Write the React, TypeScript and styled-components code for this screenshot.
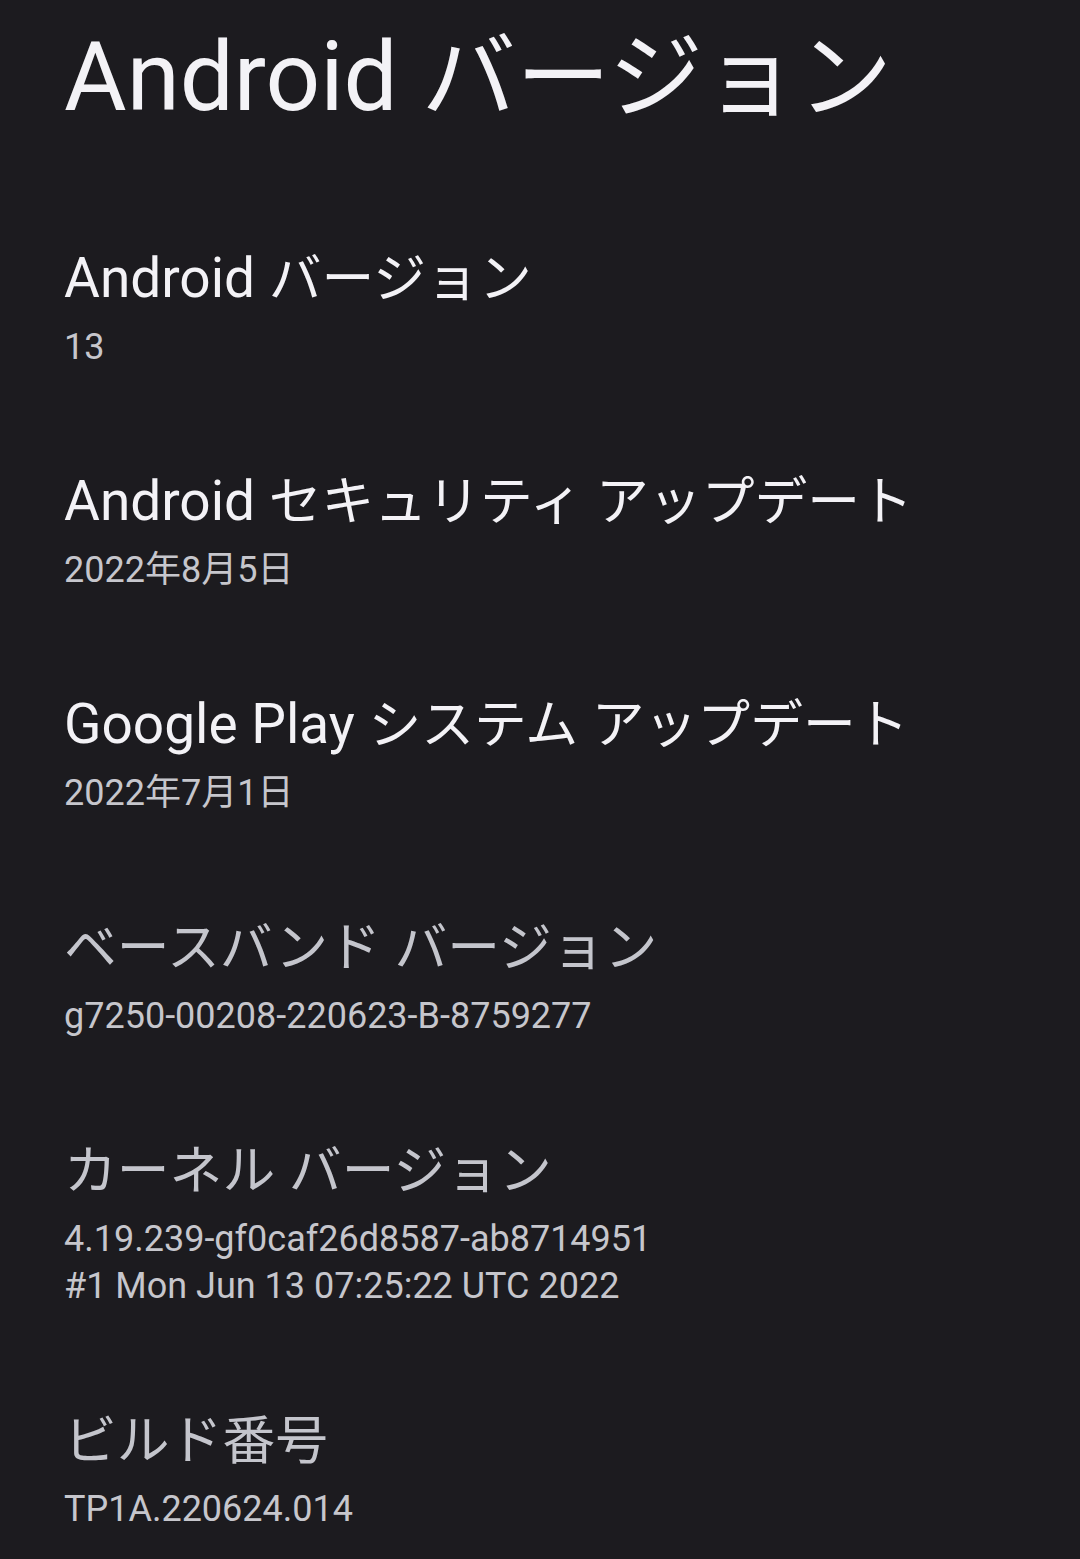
import React from "react";
import styled, { createGlobalStyle } from "styled-components";

const Global = createGlobalStyle`
  html, body { margin: 0; padding: 0; background: #1c1b1f; }
  body { font-family: "Roboto", "Noto Sans CJK JP", sans-serif; }
`;

const Page = styled.div`
  min-height: 1559px;
  background: #1c1b1f;
  padding: 0 64px;
  box-sizing: border-box;
  overflow: hidden;
`;

const Heading = styled.h1`
  margin: 0;
  padding-top: 22px;
  font-weight: 400;
  font-size: 96px;
  line-height: 110px;
  color: #f3f2f6;
  white-space: nowrap;
`;

const List = styled.div`
  display: flex;
  flex-direction: column;
  margin-top: 112px;
`;

const Item = styled.div`
  padding: 0 0 97px;
`;

const Title = styled.div<{ $disabled?: boolean }>`
  font-size: 55px;
  line-height: 66px;
  color: ${(p) => (p.$disabled ? "#c4c5cc" : "#f3f2f6")};
  white-space: nowrap;
`;

const Cjk = styled.span<{ $scale: number }>`
  font-size: ${(p) => p.$scale}em;
`;

const Summary = styled.div`
  margin-top: 12px;
  font-size: 36px;
  line-height: 47px;
  color: #c6c6cc;
  white-space: pre-line;
`;

const items = [
  { title: "Android バージョン", summary: "13" },
  { title: "Android セキュリティ アップデート", summary: "2022年8月5日" },
  { title: "Google Play システム アップデート", summary: "2022年7月1日" },
  { title: "ベースバンド バージョン", summary: "g7250-00208-220623-B-8759277", disabled: true },
  {
    title: "カーネル バージョン",
    summary: "4.19.239-gf0caf26d8587-ab8714951\n#1 Mon Jun 13 07:25:22 UTC 2022",
    disabled: true,
  },
  { title: "ビルド番号", summary: "TP1A.220624.014", disabled: true },
];

const CJK_RUN = /([\u3000-\u30ff\u4e00-\u9fff]+)/;

function renderMixed(text: string, scale: number) {
  return text
    .split(CJK_RUN)
    .filter((s) => s.length > 0)
    .map((part, i) =>
      /[\u3000-\u30ff\u4e00-\u9fff]/.test(part) ? (
        <Cjk key={i} $scale={scale}>
          {part}
        </Cjk>
      ) : (
        <React.Fragment key={i}>{part}</React.Fragment>
      )
    );
}

export default function App() {
  return (
    <Page>
      <Global />
      <Heading>{renderMixed("Android バージョン", 0.985)}</Heading>
      <List>
        {items.map((it) => (
          <Item key={it.title}>
            <Title $disabled={it.disabled}>{renderMixed(it.title, 0.96)}</Title>
            <Summary>{it.summary}</Summary>
          </Item>
        ))}
      </List>
    </Page>
  );
}
